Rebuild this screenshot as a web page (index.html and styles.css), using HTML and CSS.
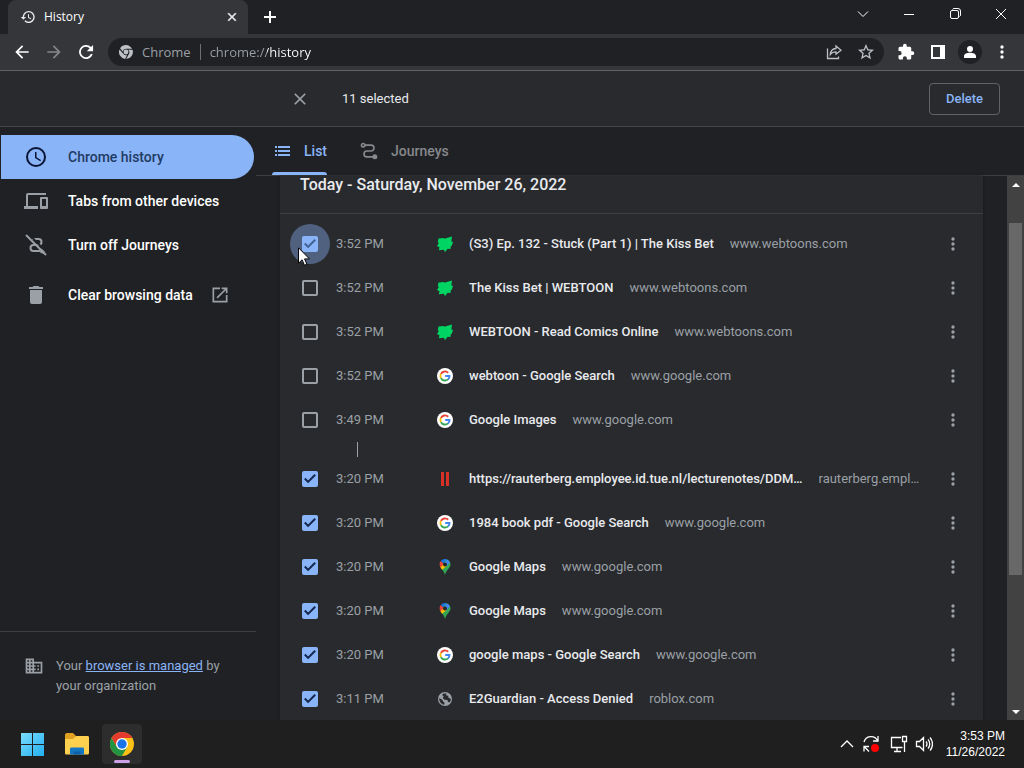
FILE: index.html
```html
<!DOCTYPE html>
<html lang="en">
<head>
<meta charset="utf-8">
<title>History</title>
<link rel="stylesheet" href="styles.css">
</head>
<body>
<svg class="sprite" aria-hidden="true">
  <symbol id="history" viewBox="0 0 24 24"><path d="M13 3a9 9 0 0 0-9 9H1l3.9 3.9.07.14L9 12H6a7 7 0 1 1 7 7c-1.93 0-3.68-.79-4.94-2.06l-1.42 1.42A9 9 0 1 0 13 3zm-1 5v5l4.28 2.54.72-1.21-3.500-2.080V8z"/></symbol>
  <symbol id="close" viewBox="0 0 24 24"><path d="M19 6.410 17.590 5 12 10.590 6.410 5 5 6.410 10.590 12 5 17.590 6.410 19 12 13.410 17.590 19 19 17.590 13.410 12z"/></symbol>
  <symbol id="back" viewBox="0 0 24 24"><path d="M20 11H7.830l5.590-5.590L12 4l-8 8 8 8 1.410-1.410L7.830 13H20z"/></symbol>
  <symbol id="dots" viewBox="0 0 24 24"><path d="M12 8a2 2 0 1 0 0-4 2 2 0 0 0 0 4zm0 2a2 2 0 1 0 0 4 2 2 0 0 0 0-4zm0 6a2 2 0 1 0 0 4 2 2 0 0 0 0-4z"/></symbol>
  <symbol id="journeys" viewBox="0 0 24 24"><path fill="none" stroke="currentColor" stroke-width="2" d="M7 5h7.500a3.500 3.500 0 0 1 0 7h-5a3.500 3.500 0 0 0 0 7H17"/><circle cx="5" cy="5" r="2" fill="none" stroke="currentColor" stroke-width="2"/><circle cx="19" cy="19" r="3"/></symbol>
  <symbol id="webtoon" viewBox="0 0 16 16"><path fill="#00d564" d="M1.500 2.500 7 2l.2.800L15 .5l-.7 5 1.700.2-1.200 4-1 .3-.3 3-2.800-.2L8 16l-1.200-2.200-5 .4.700-3L0 10l1.800-3L.8 6z"/></symbol>
  <symbol id="google" viewBox="0 0 16 16"><circle cx="8" cy="8" r="8" fill="#fff"/><g fill="none" stroke-width="1.900"><path stroke="#ea4335" d="M3.900 5.900a4.600 4.600 0 0 1 7.300-1.200"/><path stroke="#fbbc05" d="M3.900 10.100a4.600 4.600 0 0 1 0-4.200"/><path stroke="#34a853" d="M3.900 10.100a4.600 4.600 0 0 0 7.100 1.300"/><path stroke="#4285f4" d="M8.200 8h4.300c.1 1.500-.5 2.600-1.500 3.400"/></g></symbol>
  <symbol id="maps" viewBox="0 0 16 16"><path fill="#34a853" d="M8 0a5.500 5.500 0 0 1 5.500 5.600C13.500 9 9.500 10.500 8 16 7.300 13 5.700 11.300 4.300 9.500z"/><path fill="#fbbc04" d="m3.300 8 2.800-3.500L9.500 7 5.200 10.700A10 10 0 0 1 3.300 8z"/><path fill="#ea4335" d="M3.800 2 7 4.500 3.500 8.500C2 6 2.500 3.500 3.800 2z"/><path fill="#1a73e8" d="M3.800 2A5.500 5.500 0 0 1 9.500.2L6.300 4.200z"/><path fill="#4285f4" d="M9.500.2A5.500 5.500 0 0 1 13 3.300L9.700 7.200 8 4z"/><circle cx="8" cy="5.500" r="2" fill="#25272c"/></symbol>
  <symbol id="globe" viewBox="0 0 16 16"><circle cx="8" cy="8" r="7" fill="#9aa0a6"/><path fill="#292a2d" d="M6.500 2.500h3L9 4.200l2.200.5.300 2L14 8l-1 3.300-2-.3-.6-2-3-.2L5.800 7l.9-1.800L5 4zM2.300 7l3.200 2 .5 1.500 1.500 1-.2 2.200C4 13.300 2 10.500 2.300 7z"/></symbol>
  <symbol id="chromeicon" viewBox="0 0 24 24"><circle cx="12" cy="12" r="12" fill="#fbc116"/><path fill="#e33b2e" d="M1.600 6a12 12 0 0 1 20.800 0H12L6.800 15z"/><path fill="#229342" d="M1.600 6a12 12 0 0 0 10.400 18l5.200-9-10.400 0z"/><circle cx="12" cy="12" r="6" fill="#fff"/><circle cx="12" cy="12" r="4.700" fill="#1a73e8"/></symbol>
</svg>

<header class="titlebar">
  <div class="browser-tab">
    <svg class="i16"><use href="#history"/></svg>
    <span class="tab-name">History</span>
    <button class="plain" aria-label="Close tab"><svg class="i14 thick"><use href="#close"/></svg></button>
  </div>
  <button class="plain new-tab" aria-label="New tab"><svg class="i14" viewBox="0 0 14 14"><path d="M7 1v12M1 7h12" stroke="currentColor" stroke-width="2"/></svg></button>
  <div class="window-buttons">
    <button class="plain" aria-label="Search tabs"><svg class="i12" viewBox="0 0 12 12"><path class="line" d="m1 3.500 5 5 5-5"/></svg></button>
    <button class="plain" aria-label="Minimize"><svg class="i12" viewBox="0 0 12 12"><path class="line" d="M1 6.500h10"/></svg></button>
    <button class="plain" aria-label="Restore"><svg class="i12" viewBox="0 0 12 12"><path class="line" d="M3.500 1.500c.3-.6.800-1 1.500-1h4a2.500 2.500 0 0 1 2.500 2.500v4c0 .8-.4 1.200-1 1.500"/><rect class="line" x="1.500" y="2.500" width="8" height="8" rx="1.500"/></svg></button>
    <button class="plain" aria-label="Close"><svg class="i12" viewBox="0 0 12 12"><path class="line" d="m1 1 10 10M11 1 1 11"/></svg></button>
  </div>
</header>

<div class="toolbar">
  <button class="plain tool" aria-label="Back"><svg class="i20"><use href="#back"/></svg></button>
  <button class="plain tool dim" aria-label="Forward"><svg class="i20 flip"><use href="#back"/></svg></button>
  <button class="plain tool" aria-label="Reload"><svg class="i20" viewBox="0 0 24 24"><path d="M18 6a8.400 8.400 0 1 0 2.100 8.500h-2.400A6.200 6.200 0 1 1 16.400 7.600L13 11h7.500V3.500z"/></svg></button>
  <div class="omnibox">
    <svg class="i14" viewBox="0 0 24 24"><circle cx="12" cy="12" r="4.200"/><path d="M1.800 5.600a12 12 0 0 1 20.700.9H12A5.800 5.800 0 0 0 6.500 11zM.9 7.500A12 12 0 0 0 10.500 24l3.300-6.700A5.800 5.800 0 0 1 7 14.700zM23.200 8.200A12 12 0 0 1 12.300 24L17.200 15a5.800 5.800 0 0 0-1.500-6.800z"/></svg>
    <label for="url">Chrome</label>
    <span class="bar"></span>
    <input id="url" type="text" value="chrome://history">
    <button class="plain tool" aria-label="Share"><svg class="i16" viewBox="0 0 16 16"><path class="line bold" d="M1.500 4.500v10h11v-2M10 2l5 4.200-5 4V7.800c-2.600 0-4.400.8-5.700 2.700C4.500 7 6.500 4.800 10 4.500z"/></svg></button>
    <button class="plain tool" aria-label="Bookmark"><svg class="i16" viewBox="2 2 20 20"><path d="m22 9.240-7.190-.62L12 2 9.190 8.630 2 9.240l5.460 4.730L5.820 21 12 17.270 18.180 21l-1.630-7.030zM12 15.400l-3.760 2.270 1-4.280-3.320-2.880 4.380-.38L12 6.100l1.710 4.040 4.380.38-3.320 2.880 1 4.280z"/></svg></button>
  </div>
  <button class="plain tool" aria-label="Extensions"><svg class="i18" viewBox="0 0 24 24"><path d="M20.500 11H19V7a2 2 0 0 0-2-2h-4V3.500a2.500 2.500 0 0 0-5 0V5H4a2 2 0 0 0-2 2v3.800h1.500a2.700 2.700 0 0 1 0 5.400H2V20c0 1.100.9 2 2 2h3.800v-1.500a2.700 2.700 0 0 1 5.400 0V22H17a2 2 0 0 0 2-2v-4h1.500a2.500 2.500 0 0 0 0-5z"/></svg></button>
  <button class="plain tool" aria-label="Side panel"><svg class="i14" viewBox="0 0 14 14"><path fill-rule="evenodd" d="M0 0h14v14H0zM2 2v10h7V2z"/></svg></button>
  <button class="plain tool avatar" aria-label="Profile"><svg viewBox="0 0 24 24"><path d="M12 12a4 4 0 1 0 0-8 4 4 0 0 0 0 8zm0 1c-4 0-8 1.600-8 4.500V20h16v-2.500c0-2.900-4-4.500-8-4.500z"/></svg></button>
  <button class="plain tool" aria-label="Menu"><svg class="i20"><use href="#dots"/></svg></button>
</div>

<div class="selection-bar">
  <button class="plain clear" aria-label="Cancel selection"><svg class="i20"><use href="#close"/></svg></button>
  <span class="count">11 selected</span>
  <button class="delete">Delete</button>
</div>

<div class="page">
  <aside class="sidebar">
    <nav>
      <a class="nav-item active" href="#"><svg class="i24" viewBox="0 0 24 24"><path d="M12 2a10 10 0 1 0 0 20 10 10 0 0 0 0-20zm0 18a8 8 0 1 1 0-16 8 8 0 0 1 0 16zm.5-13H11v6l5.250 3.150.75-1.230-4.500-2.670z"/></svg>Chrome history</a>
      <a class="nav-item" href="#"><svg class="i24" viewBox="0 0 24 24"><path d="M4 6h18V4H4a2 2 0 0 0-2 2v11H0v3h14v-3H4zm19 2h-6a1 1 0 0 0-1 1v10c0 .6.400 1 1 1h6a1 1 0 0 0 1-1V9a1 1 0 0 0-1-1zm-1 9h-4v-7h4z"/></svg>Tabs from other devices</a>
      <a class="nav-item" href="#"><svg class="i24" viewBox="0 0 24 24"><path class="route" d="M8 6h6.500a3 3 0 0 1 0 6h-5a3 3 0 0 0 0 6H16"/><circle cx="18.500" cy="18" r="2.500"/><path class="cut" d="m3.500 0 20 20"/><path class="slash" d="m2 2 20 20"/></svg>Turn off Journeys</a>
      <a class="nav-item spaced" href="#"><svg class="i24" viewBox="0 0 24 24"><path d="M6 19a2 2 0 0 0 2 2h8a2 2 0 0 0 2-2V7H6zM19 4h-3.500l-1-1h-5l-1 1H5v2h14z"/></svg>Clear browsing data<svg class="i20 external" viewBox="0 0 24 24"><path d="M19 19H5V5h7V3H3v18h18v-9h-2zM14 3v2h3.590l-9.830 9.830 1.410 1.410L19 6.410V10h2V3z"/></svg></a>
    </nav>
    <footer class="managed">
      <svg class="i20" viewBox="0 0 24 24"><path d="M12 7V3H2v18h20V7zM6 19H4v-2h2zm0-4H4v-2h2zm0-4H4V9h2zm0-4H4V5h2zm4 12H8v-2h2zm0-4H8v-2h2zm0-4H8V9h2zm0-4H8V5h2zm10 12h-8v-2h2v-2h-2v-2h2v-2h-2V9h8zm-2-8h-2v2h2zm0 4h-2v2h2z"/></svg>
      <p>Your <a href="#">browser is managed</a> by your organization</p>
    </footer>
  </aside>

  <main>
    <nav class="views">
      <a class="view on" href="#"><svg class="i20" viewBox="0 0 20 20"><path d="M6 5h12v2H6zm0 4h12v2H6zm0 4h12v2H6zM3 5h2v2H3zm0 4h2v2H3zm0 4h2v2H3z"/></svg>List</a>
      <a class="view" href="#"><svg class="i20"><use href="#journeys"/></svg>Journeys</a>
    </nav>
    <div class="scroller">
      <section class="card">
        <h1>Today - Saturday, November 26, 2022</h1>
        <ul>
          <li class="hovered"><input type="checkbox" id="r1" checked><time>3:52 PM</time><svg class="i16"><use href="#webtoon"/></svg><label for="r1">(S3) Ep. 132 - Stuck (Part 1) | The Kiss Bet</label><span class="site">www.webtoons.com</span><button class="plain more" aria-label="Actions"><svg class="i20"><use href="#dots"/></svg></button>
            <svg class="pointer" viewBox="0 0 12 19"><path d="M.5.800v15.400l3.600-3.400 2.400 5.500 2.400-1-2.300-5.400h4.900z" fill="#fff" stroke="#000"/></svg></li>
          <li><input type="checkbox" id="r2"><time>3:52 PM</time><svg class="i16"><use href="#webtoon"/></svg><label for="r2">The Kiss Bet | WEBTOON</label><span class="site">www.webtoons.com</span><button class="plain more" aria-label="Actions"><svg class="i20"><use href="#dots"/></svg></button></li>
          <li><input type="checkbox" id="r3"><time>3:52 PM</time><svg class="i16"><use href="#webtoon"/></svg><label for="r3">WEBTOON - Read Comics Online</label><span class="site">www.webtoons.com</span><button class="plain more" aria-label="Actions"><svg class="i20"><use href="#dots"/></svg></button></li>
          <li><input type="checkbox" id="r4"><time>3:52 PM</time><svg class="i16"><use href="#google"/></svg><label for="r4">webtoon - Google Search</label><span class="site">www.google.com</span><button class="plain more" aria-label="Actions"><svg class="i20"><use href="#dots"/></svg></button></li>
          <li><input type="checkbox" id="r5"><time>3:49 PM</time><svg class="i16"><use href="#google"/></svg><label for="r5">Google Images</label><span class="site">www.google.com</span><button class="plain more" aria-label="Actions"><svg class="i20"><use href="#dots"/></svg></button></li>
          <li class="gap" role="separator"></li>
          <li><input type="checkbox" id="r6" checked><time>3:20 PM</time><svg class="i16" viewBox="0 0 16 16"><path fill="#d93025" d="M4 1h3v14H4zM9 1h3v14H9z"/></svg><label for="r6">https://rauterberg.employee.id.tue.nl/lecturenotes/DDM…</label><span class="site">rauterberg.empl…</span><button class="plain more" aria-label="Actions"><svg class="i20"><use href="#dots"/></svg></button></li>
          <li><input type="checkbox" id="r7" checked><time>3:20 PM</time><svg class="i16"><use href="#google"/></svg><label for="r7">1984 book pdf - Google Search</label><span class="site">www.google.com</span><button class="plain more" aria-label="Actions"><svg class="i20"><use href="#dots"/></svg></button></li>
          <li><input type="checkbox" id="r8" checked><time>3:20 PM</time><svg class="i16"><use href="#maps"/></svg><label for="r8">Google Maps</label><span class="site">www.google.com</span><button class="plain more" aria-label="Actions"><svg class="i20"><use href="#dots"/></svg></button></li>
          <li><input type="checkbox" id="r9" checked><time>3:20 PM</time><svg class="i16"><use href="#maps"/></svg><label for="r9">Google Maps</label><span class="site">www.google.com</span><button class="plain more" aria-label="Actions"><svg class="i20"><use href="#dots"/></svg></button></li>
          <li><input type="checkbox" id="r10" checked><time>3:20 PM</time><svg class="i16"><use href="#google"/></svg><label for="r10">google maps - Google Search</label><span class="site">www.google.com</span><button class="plain more" aria-label="Actions"><svg class="i20"><use href="#dots"/></svg></button></li>
          <li><input type="checkbox" id="r11" checked><time>3:11 PM</time><svg class="i16"><use href="#globe"/></svg><label for="r11">E2Guardian - Access Denied</label><span class="site">roblox.com</span><button class="plain more" aria-label="Actions"><svg class="i20"><use href="#dots"/></svg></button></li>
        </ul>
      </section>
      <div class="scrollbar">
        <svg class="arrow" viewBox="0 0 17 17"><path d="M5 11h8L9 7z"/></svg>
        <div class="track"><div class="thumb"></div></div>
        <svg class="arrow" viewBox="0 0 17 17"><path d="M5 7h8l-4 4z"/></svg>
      </div>
    </div>
  </main>
</div>

<footer class="taskbar">
  <button class="plain app" aria-label="Start"><svg class="i24" viewBox="0 0 24 24"><defs><linearGradient id="win" gradientUnits="userSpaceOnUse" x1="0" y1="0" x2="24" y2="24"><stop stop-color="#7fe0fc"/><stop offset="1" stop-color="#22aef0"/></linearGradient></defs><path fill="url(#win)" d="M1 1h11v11H1zm12 0h11v11H13zM1 13h11v11H1zm12 0h11v11H13z"/></svg></button>
  <button class="plain app" aria-label="File Explorer"><svg class="i24" viewBox="0 0 24 24"><path fill="#e0a020" d="M0 3c0-1 .5-2 2-2h6l3 3-2 5H0z"/><path fill="#fdd04f" d="M0 7h8l3-3h11.500c1 0 1.500.6 1.500 1.500V21c0 .8-.5 1.500-1.500 1.500h-21C.5 22.500 0 22 0 21z"/><path fill="#1477c4" d="M5 22.500V17c0-1 .6-1.500 1.500-1.500h11c1 0 1.500.5 1.500 1.500v5.500z"/><path fill="#0f5fa8" d="M8.500 19.500h7v3h-7z"/></svg></button>
  <button class="plain app current" aria-label="Google Chrome"><svg class="i24"><use href="#chromeicon"/></svg></button>
  <div class="tray">
    <svg class="i16" viewBox="0 0 16 16"><path class="line bold" d="m2 11 6-6 6 6"/></svg>
    <svg class="i18" viewBox="0 0 18 18"><path class="line bold" d="M2 7a7.300 7.300 0 0 1 13.500-1.500M16 1v5h-5M2 16.500v-5h5M2.300 11.800 7 16.500"/><circle cx="13" cy="13" r="4" fill="#f00"/></svg>
    <svg class="i18 monitor" viewBox="0 0 18 18"><path class="line bold" d="M11 2.500H1.500v10h11M7 13v3M4 16.500h7M12.500 1.500h4v5h-4zM14.500 7v10"/></svg>
    <svg class="i18" viewBox="0 0 18 18"><path class="line bold" d="M1.500 6.500h3l4-4v13l-4-4h-3zM11 6.500a4 4 0 0 1 0 5M13 4.500c2.300 2.500 2.300 6.500 0 9M15 2.500c3.300 3.700 3.300 9.300 0 13"/></svg>
    <div class="clock"><span>3:53 PM</span><span>11/26/2022</span></div>
  </div>
</footer>
</body>
</html>
```
FILE: styles.css
```css
* { box-sizing: border-box; }
body {
  margin: 0;
  height: 100vh;
  display: flex;
  flex-direction: column;
  overflow: hidden;
  background: #202124;
  color: #e8eaed;
  font: 13px/20px Roboto, "Liberation Sans", sans-serif;
}
.sprite { display: none; }
svg { flex: none; display: block; fill: currentColor; }
.i12 { width: 12px; height: 12px; }
.i14 { width: 14px; height: 14px; }
.i16 { width: 16px; height: 16px; }
.i18 { width: 18px; height: 18px; }
.i20 { width: 20px; height: 20px; }
.i24 { width: 24px; height: 24px; }
.line { fill: none; stroke: currentColor; stroke-width: 1; }
.bold { stroke-width: 1.3; }
.thick { stroke: currentColor; stroke-width: 1; }
.flip { transform: scaleX(-1); }
.plain {
  flex: none;
  display: flex;
  align-items: center;
  justify-content: center;
  padding: 0;
  border: 0;
  background: none;
  color: inherit;
}

.titlebar { flex: none; display: flex; height: 34px; padding-left: 8px; }
.browser-tab {
  width: 240px;
  display: flex;
  align-items: center;
  gap: 8px;
  padding: 0 9px 0 12px;
  border-radius: 8px 8px 0 0;
  background: #35363a;
  font: 12px/16px "Open Sans", "Noto Sans", sans-serif;
}
.tab-name { flex: 1; color: #fff; }
.new-tab { width: 44px; color: #fff; }
.window-buttons { display: flex; height: 28px; margin-left: auto; color: #fff; }
.window-buttons .plain { width: 46px; }

.toolbar {
  flex: none;
  display: flex;
  align-items: center;
  height: 37px;
  padding: 0 6px;
  border-bottom: 1px solid #5f6368;
  background: #35363a;
  color: #fff;
}
.tool { width: 32px; height: 28px; }
.dim { color: #85868a; }
.omnibox {
  flex: 1;
  display: flex;
  align-items: center;
  min-width: 0;
  height: 28px;
  margin: 0 6px;
  padding: 0 2px 0 11px;
  border-radius: 14px;
  background: #202124;
  color: #bdc1c6;
  font: 13px/20px "Open Sans", "Noto Sans", sans-serif;
}
.omnibox label { margin-left: 9px; color: #9aa0a6; }
.bar { width: 1px; height: 16px; margin: 0 9px; background: #6b6e73; }
.omnibox input {
  flex: 1;
  min-width: 0;
  padding: 0;
  border: 0;
  outline: 0;
  font: inherit;
  color: transparent;
  background: linear-gradient(90deg, #9aa0a6 57px, #fff 57px);
  background-clip: text;
  -webkit-background-clip: text;
}
.avatar svg { width: 24px; height: 24px; padding: 3px; border-radius: 50%; background: #202124; }

.selection-bar {
  flex: none;
  display: flex;
  align-items: center;
  height: 56px;
  padding: 0 24px 0 290px;
  border-bottom: 1px solid #44464a;
  background: #292a2d;
}
.clear { color: #9aa0a6; }
.count { margin-left: 32px; }
.delete {
  height: 32px;
  margin-left: auto;
  padding: 0 16px;
  border: 1px solid #5f6368;
  border-radius: 4px;
  background: none;
  color: #8ab4f8;
  font: 500 13px/20px Roboto, sans-serif;
}

.page { flex: 1; display: flex; min-height: 0; }
.sidebar { flex: none; width: 256px; display: flex; flex-direction: column; padding-top: 8px; }
.nav-item {
  display: flex;
  align-items: center;
  gap: 20px;
  height: 44px;
  margin: 0 2px 0 1px;
  padding-left: 23px;
  border-radius: 0 22px 22px 0;
  color: #fff;
  font-size: 14px;
  font-weight: 500;
  text-decoration: none;
}
.nav-item svg { color: #9aa0a6; }
.nav-item.active { background: #8ab4f8; color: #1f3b63; }
.nav-item.active svg { color: #0a1535; }
.nav-item.spaced { gap: 17px; margin-top: 6px; }
.nav-item.spaced svg:first-child { margin-right: 3px; }
.route { fill: none; stroke: currentColor; stroke-width: 2; }
.slash { stroke: currentColor; stroke-width: 2; }
.cut { stroke: #202124; stroke-width: 2; }
.managed {
  display: flex;
  gap: 12px;
  margin-top: auto;
  padding: 24px;
  border-top: 1px solid #3c4043;
  color: #9aa0a6;
}
.managed p { margin: 0; }
.managed a { color: #8ab4f8; }

main { flex: 1; min-width: 0; display: flex; flex-direction: column; }
.views {
  flex: none;
  display: flex;
  gap: 32px;
  height: 49px;
  padding-left: 16px;
  border-bottom: 1px solid #3c4043;
}
.view {
  display: flex;
  align-items: center;
  gap: 12px;
  color: #85888c;
  font-size: 14px;
  font-weight: 500;
  text-decoration: none;
}
.view.on { position: relative; color: #8ab4f8; }
.view.on::after {
  content: "";
  position: absolute;
  left: 0;
  right: 0;
  bottom: 0;
  height: 3px;
  border-radius: 3px 3px 0 0;
  background: #8ab4f8;
}
.scroller { flex: 1; display: flex; min-height: 0; }
.card {
  flex: 1;
  min-width: 0;
  margin: 0 24px;
  overflow: hidden;
  background: #292a2d;
  box-shadow: 0 0 3px #17181a;
}
h1 {
  height: 38px;
  margin: 0;
  padding-left: 20px;
  border-bottom: 1px solid #3c4043;
  font-size: 16px;
  line-height: 18px;
  font-weight: 500;
}
ul { margin: 0; padding: 8px 0 0; list-style: none; }
li { display: flex; align-items: center; height: 44px; padding: 0 20px 0 22px; }
li.hovered { position: relative; }
li.gap { height: 15px; margin-left: 77px; padding: 0; border-left: 1px solid #9aa0a6; }
li input {
  appearance: none;
  flex: none;
  position: relative;
  width: 16px;
  height: 16px;
  margin: 0;
  border: 2px solid #9aa0a6;
  border-radius: 2px;
}
li input:checked { border-color: #8ab4f8; background: #8ab4f8; }
li input:checked::before {
  content: "";
  position: absolute;
  inset: -2px;
  background: #14284f;
  clip-path: polygon(13% 51%, 22% 42%, 38% 59%, 78% 19%, 87% 28%, 38% 77%);
}
.hovered input::after {
  content: "";
  position: absolute;
  inset: -14px;
  border-radius: 50%;
  background: #8ab4f8;
  opacity: 0.4;
}
time { width: 101px; margin-left: 18px; color: #9aa0a6; flex: none; }
li label {
  margin: 0 16px;
  overflow: hidden;
  font-weight: 500;
  white-space: nowrap;
  text-overflow: ellipsis;
}
.site { color: #9aa0a6; white-space: nowrap; }
.more { margin-left: auto; color: #9aa0a6; }
.pointer { position: absolute; left: 18px; top: 25px; width: 12px; height: 19px; }

.scrollbar { flex: none; display: flex; flex-direction: column; width: 17px; background: #424242; }
.arrow { width: 17px; height: 17px; color: #fff; }
.track { flex: 1; padding: 30px 2px 0; }
.thumb { height: 74%; max-height: 352px; background: #686868; }

.taskbar {
  flex: none;
  display: flex;
  align-items: center;
  gap: 5px;
  height: 48px;
  padding: 0 19px 0 12px;
  background: #1f1f1f;
}
.app { position: relative; width: 40px; height: 40px; border-radius: 4px; }
.current { background: #2d2d2d; }
.current::after {
  content: "";
  position: absolute;
  left: 12px;
  bottom: 1px;
  width: 16px;
  height: 3px;
  border-radius: 2px;
  background: #cda0e6;
}
.tray { display: flex; align-items: center; gap: 7px; margin-left: auto; color: #fff; }
.monitor { margin-left: 3px; }
.clock {
  display: flex;
  flex-direction: column;
  margin-left: 6px;
  text-align: right;
  font: 12px/16px "Liberation Sans", sans-serif;
}
```
